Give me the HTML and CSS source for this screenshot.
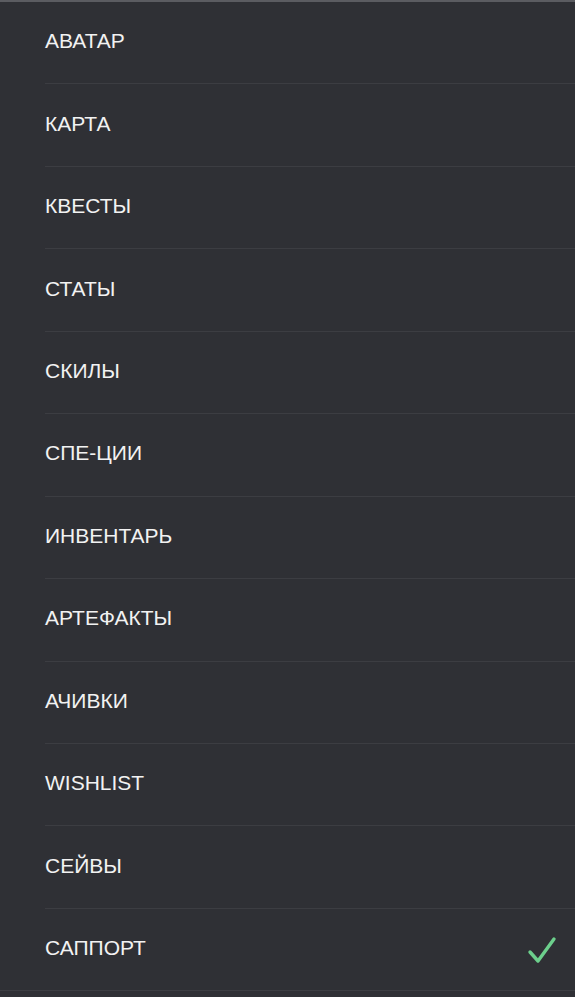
FILE: index.html
```html
<!DOCTYPE html>
<html lang="ru">
<head>
    <meta charset="UTF-8">
    <title>Меню</title>
    <link rel="stylesheet" href="styles.css">
</head>
<body>
    <ul class="menu">
        <li class="menu-item">АВАТАР</li>
        <li class="menu-item">КАРТА</li>
        <li class="menu-item">КВЕСТЫ</li>
        <li class="menu-item">СТАТЫ</li>
        <li class="menu-item">СКИЛЫ</li>
        <li class="menu-item">СПЕ-ЦИИ</li>
        <li class="menu-item">ИНВЕНТАРЬ</li>
        <li class="menu-item">АРТЕФАКТЫ</li>
        <li class="menu-item">АЧИВКИ</li>
        <li class="menu-item">WISHLIST</li>
        <li class="menu-item">СЕЙВЫ</li>
        <li class="menu-item selected">
            <span>САППОРТ</span>
            <svg class="check" width="30" height="30" viewBox="0 0 30 30">
                <path d="M3 17 L11 26 L27 4" fill="none" stroke="#6ccf8c" stroke-width="3.4" stroke-linecap="round" stroke-linejoin="round"/>
            </svg>
        </li>
    </ul>
</body>
</html>
```

FILE: styles.css
```css
body { margin: 0; background-color: #2f3035; font-family: "Liberation Sans", Arial, sans-serif; }
.menu {
    list-style: none;
    margin: 0;
    padding: 0 0 0 45px;
    border-top: 2px solid #5b5c61;
}
.menu-item {
    display: flex;
    align-items: center;
    justify-content: space-between;
    box-sizing: border-box;
    height: 82.45px;
    padding-bottom: 3px;
    border-bottom: 1px solid #3c3d42;
    color: #f2f2f2;
    font-size: 21px;
    padding-right: 18px;
}
.menu-item.selected {
    margin-left: -45px;
    padding-left: 45px;
}
.check { display: block; margin-top: 4px; }
```
